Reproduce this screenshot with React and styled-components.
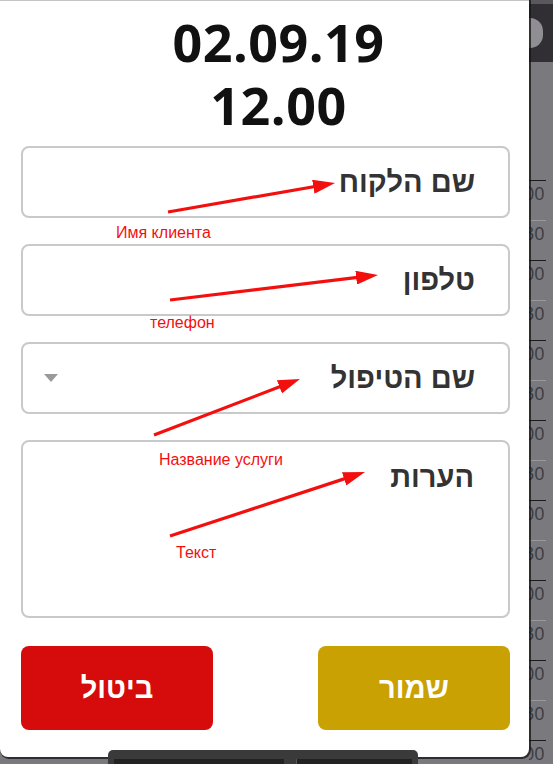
import React from 'react';
import styled, { createGlobalStyle, css } from 'styled-components';

const GlobalStyle = createGlobalStyle`
  html, body {
    margin: 0;
    padding: 0;
    background: #7a797e;
    font-family: "Liberation Sans", Arial, sans-serif;
  }
`;

const RED = '#f40f0f';

const Screen = styled.div`
  position: relative;
  display: grid;
  grid-template-columns: 529px 1fr;
  width: 553px;
  height: 764px;
  overflow: hidden;
  background: #7a797e;
`;

const Panel = styled.div`
  box-sizing: border-box;
  height: 757px;
  display: flex;
  flex-direction: column;
  padding: 9px 19px 0 21px;
  background: #fff;
  border-top: 1px solid #c4c4c4;
  border-radius: 0 0 8px 8px;
  box-shadow: 1px 1px 0 1px rgba(20, 20, 20, 0.75);
  position: relative;
  z-index: 1;
`;

const DateHeading = styled.h1`
  margin: 0;
  padding-left: 26px;
  font-family: "Open Sans", "Liberation Sans", sans-serif;
  font-weight: 700;
  font-size: 52px;
  line-height: 63px;
  letter-spacing: 0.5px;
  text-align: center;
  color: #111;
`;

const Form = styled.form`
  display: flex;
  flex-direction: column;
  gap: 26px;
  margin-top: 10px;
`;

const fieldBase = css`
  box-sizing: border-box;
  width: 100%;
  border: 2px solid #c9c9c9;
  border-radius: 8px;
  background: #fff;
  font-family: "Liberation Sans", Arial, sans-serif;
  font-weight: 700;
  font-size: 29px;
  color: #333;
  outline: none;
  &::placeholder {
    color: #333;
    opacity: 1;
  }
`;

const TextField = styled.input`
  ${fieldBase};
  height: 72px;
  padding: 0 33px 0 20px;
  text-align: right;
`;

const SelectField = styled.div`
  ${fieldBase};
  height: 72px;
  display: flex;
  align-items: center;
  justify-content: space-between;
  padding: 0 33px 0 21px;
`;

const Caret = styled.span`
  width: 0;
  height: 0;
  border-left: 7px solid transparent;
  border-right: 7px solid transparent;
  border-top: 8px solid #9a9a9a;
`;

const NotesField = styled.textarea`
  ${fieldBase};
  height: 178px;
  padding: 19px 34px 0 20px;
  resize: none;
  text-align: right;
  font-family: "Liberation Sans", Arial, sans-serif;
`;

const Actions = styled.div`
  display: flex;
  justify-content: space-between;
  margin-top: 2px;
`;

const ActionButton = styled.button`
  width: 192px;
  height: 84px;
  border: none;
  border-radius: 8px;
  background: ${(p) => (p.$tone === 'save' ? '#c9a102' : '#d60b0b')};
  color: #fff;
  font-family: "Liberation Sans", Arial, sans-serif;
  font-weight: 700;
  font-size: 29px;
  cursor: pointer;
`;

const Calendar = styled.div`
  display: flex;
  flex-direction: column;
  overflow: hidden;
`;

const CalendarHeader = styled.div`
  position: relative;
  flex-shrink: 0;
  height: 62px;
  background: #312e34;
  border-top: 4px solid #5a585c;
  box-sizing: border-box;
`;

const HeaderDot = styled.span`
  position: absolute;
  left: -12px;
  top: 14px;
  width: 26px;
  height: 30px;
  border-radius: 13px;
  background: #8f8e93;
`;

const Slots = styled.div`
  flex-shrink: 0;
  margin-top: 118px;
  display: flex;
  flex-direction: column;
`;

const Slot = styled.div`
  box-sizing: border-box;
  flex-shrink: 0;
  height: 40px;
  width: 22px;
  border-top: ${(p) => (p.$hour ? '1.5px solid #1c1c1c' : '1px solid #9a999d')};
  padding-top: 2px;
  margin-left: -5px;
  font-family: "Open Sans", sans-serif;
  font-size: 18px;
  line-height: 20px;
  color: #3c3c3e;
  white-space: nowrap;
`;

const BottomBar = styled.div`
  position: absolute;
  left: 108px;
  top: 750px;
  width: 310px;
  height: 20px;
  display: flex;
  background: #3a3a3a;
  border-radius: 5px 5px 0 0;
  z-index: 2;
`;

const BarHalf = styled.div`
  flex: ${(p) => p.$grow};
  margin-top: 9px;
  margin-left: 6px;
  margin-right: 6px;
  background: #222;
  & + & {
    border-left: 1px solid #555;
  }
`;

const Overlay = styled.svg`
  position: absolute;
  left: 0;
  top: 0;
  z-index: 3;
  pointer-events: none;
`;

const Note = styled.span`
  position: absolute;
  z-index: 3;
  font-family: "Liberation Sans", Arial, sans-serif;
  font-size: 16px;
  line-height: 18px;
  color: ${RED};
  white-space: nowrap;
`;

const arrows = [
  { x1: 168, y1: 212, x2: 335, y2: 183 },
  { x1: 170, y1: 300, x2: 378, y2: 275 },
  { x1: 154, y1: 435, x2: 300, y2: 379 },
  { x1: 170, y1: 536, x2: 365, y2: 472 },
];

const notes = [
  { text: 'Имя клиента', left: 116, top: 224 },
  { text: 'телефон', left: 150, top: 314 },
  { text: 'Название услуги', left: 159, top: 451 },
  { text: 'Текст', left: 176, top: 544 },
];

const shorten = ({ x1, y1, x2, y2 }) => {
  const dx = x2 - x1;
  const dy = y2 - y1;
  const len = Math.hypot(dx, dy);
  return { x1, y1, x2: x2 - (dx / len) * 10, y2: y2 - (dy / len) * 10 };
};

export default function App() {
  const slots = Array.from({ length: 15 }, (_, i) => i % 2 === 0);

  return (
    <>
      <GlobalStyle />
      <Screen>
        <Panel>
          <DateHeading>
            02.09.19
            <br />
            12.00
          </DateHeading>
          <Form dir="rtl" onSubmit={(e) => e.preventDefault()}>
            <TextField placeholder="שם הלקוח" />
            <TextField placeholder="טלפון" />
            <SelectField>
              <span>שם הטיפול</span>
              <Caret />
            </SelectField>
            <NotesField placeholder="הערות" />
            <Actions>
              <ActionButton type="submit" $tone="save">שמור</ActionButton>
              <ActionButton type="button" $tone="cancel">ביטול</ActionButton>
            </Actions>
          </Form>
        </Panel>

        <Calendar>
          <CalendarHeader>
            <HeaderDot />
          </CalendarHeader>
          <Slots>
            {slots.map((hour, i) => (
              <Slot key={i} $hour={hour}>{hour ? '00' : '30'}</Slot>
            ))}
          </Slots>
        </Calendar>

        <BottomBar>
          <BarHalf $grow={185} />
          <BarHalf $grow={125} />
        </BottomBar>

        <Overlay width="553" height="764" viewBox="0 0 553 764">
          <defs>
            <marker
              id="head"
              markerUnits="userSpaceOnUse"
              markerWidth="22"
              markerHeight="14"
              refX="12"
              refY="7"
              orient="auto"
            >
              <path d="M0,0 L22,7 L0,14 z" fill={RED} />
            </marker>
          </defs>
          {arrows.map((a, i) => {
            const s = shorten(a);
            return (
              <line
                key={i}
                x1={s.x1}
                y1={s.y1}
                x2={s.x2}
                y2={s.y2}
                stroke={RED}
                strokeWidth="3.2"
                markerEnd="url(#head)"
              />
            );
          })}
        </Overlay>

        {notes.map((n) => (
          <Note key={n.text} style={{ left: n.left, top: n.top }}>
            {n.text}
          </Note>
        ))}
      </Screen>
    </>
  );
}
